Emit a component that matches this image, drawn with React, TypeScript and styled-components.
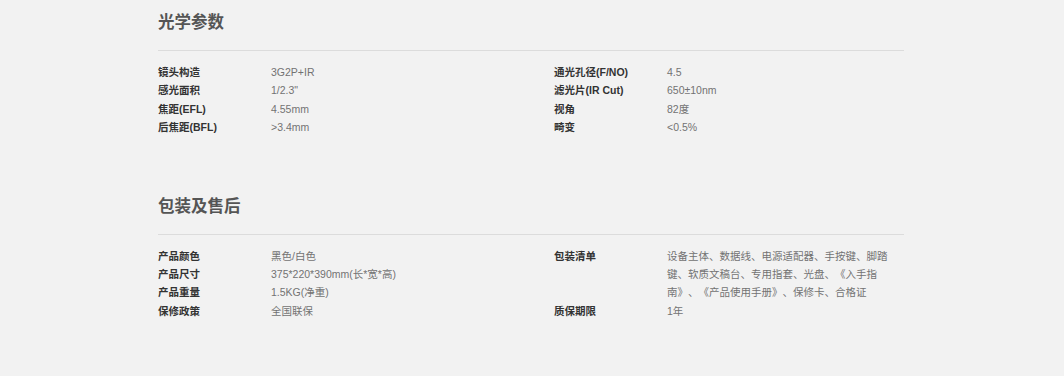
import React from "react";
import styled, { createGlobalStyle } from "styled-components";

const GlobalStyle = createGlobalStyle`
  html, body {
    margin: 0;
    padding: 0;
    background: #f2f2f2;
  }
  body {
    font-family: "Liberation Sans", "Noto Sans CJK SC", sans-serif;
    text-spacing-trim: space-all;
  }
`;

const Page = styled.div`
  width: 746px;
  margin-left: 158px;
  padding-top: 10px;
`;

const Section = styled.section`
  margin-bottom: 57px;
`;

const Title = styled.h2`
  margin: 0;
  font-size: 16.5px;
  line-height: 24px;
  font-weight: bold;
  color: #555;
  padding-bottom: 16px;
  border-bottom: 1px solid #dcdcdc;
`;

const Columns = styled.div`
  display: grid;
  grid-template-columns: 396px 1fr;
  padding-top: 12px;
`;

const List = styled.div`
  display: flex;
  flex-direction: column;
`;

const Row = styled.div`
  display: grid;
  grid-template-columns: 113px 1fr;
  font-size: 10.5px;
  line-height: 18.4px;
`;

const Label = styled.span`
  font-weight: bold;
  color: #333;
`;

const Value = styled.span<{ $wrap?: number }>`
  color: #727272;
  max-width: ${(p) => (p.$wrap ? `${p.$wrap}px` : "none")};
`;

type Item = { label: string; value: string; wrap?: number };

const sections: { title: string; left: Item[]; right: Item[] }[] = [
  {
    title: "光学参数",
    left: [
      { label: "镜头构造", value: "3G2P+IR" },
      { label: "感光面积", value: "1/2.3\"" },
      { label: "焦距(EFL)", value: "4.55mm" },
      { label: "后焦距(BFL)", value: ">3.4mm" },
    ],
    right: [
      { label: "通光孔径(F/NO)", value: "4.5" },
      { label: "滤光片(IR Cut)", value: "650±10nm" },
      { label: "视角", value: "82度" },
      { label: "畸变", value: "<0.5%" },
    ],
  },
  {
    title: "包装及售后",
    left: [
      { label: "产品颜色", value: "黑色/白色" },
      { label: "产品尺寸", value: "375*220*390mm(长*宽*高)" },
      { label: "产品重量", value: "1.5KG(净重)" },
      { label: "保修政策", value: "全国联保" },
    ],
    right: [
      {
        label: "包装清单",
        value:
          "设备主体、数据线、电源适配器、手按键、脚踏键、软质文稿台、专用指套、光盘、《入手指南》、《产品使用手册》、保修卡、合格证",
        wrap: 224,
      },
      { label: "质保期限", value: "1年" },
    ],
  },
];

const Spec = ({ items }: { items: Item[] }) => (
  <List>
    {items.map((it) => (
      <Row key={it.label}>
        <Label>{it.label}</Label>
        <Value $wrap={it.wrap}>{it.value}</Value>
      </Row>
    ))}
  </List>
);

export default function App() {
  return (
    <>
      <GlobalStyle />
      <Page>
        {sections.map((s) => (
          <Section key={s.title}>
            <Title>{s.title}</Title>
            <Columns>
              <Spec items={s.left} />
              <Spec items={s.right} />
            </Columns>
          </Section>
        ))}
      </Page>
    </>
  );
}
